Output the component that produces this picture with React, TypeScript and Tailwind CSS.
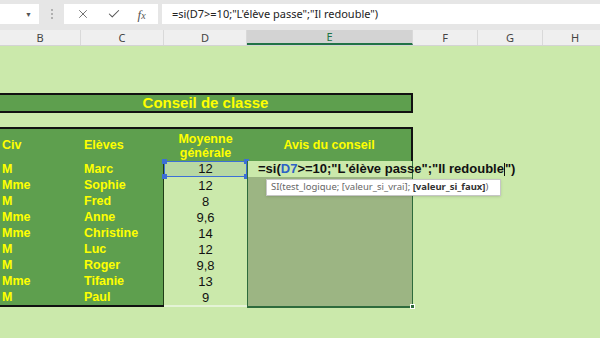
import { X, Check } from 'lucide-react';

const rows = [
  { civ: 'M', nom: 'Marc', moy: '12' },
  { civ: 'Mme', nom: 'Sophie', moy: '12' },
  { civ: 'M', nom: 'Fred', moy: '8' },
  { civ: 'Mme', nom: 'Anne', moy: '9,6' },
  { civ: 'Mme', nom: 'Christine', moy: '14' },
  { civ: 'M', nom: 'Luc', moy: '12' },
  { civ: 'M', nom: 'Roger', moy: '9,8' },
  { civ: 'Mme', nom: 'Tifanie', moy: '13' },
  { civ: 'M', nom: 'Paul', moy: '9' },
];

const columns = [
  { label: 'B', w: 'w-[81px]' },
  { label: 'C', w: 'w-[83px]' },
  { label: 'D', w: 'w-[83px]' },
  { label: 'E', w: 'w-[166px]', active: true },
  { label: 'F', w: 'w-[65px]' },
  { label: 'G', w: 'w-[65px]' },
  { label: 'H', w: 'w-[65px]' },
];

const ui = "font-['Noto_Sans',sans-serif]";

export default function App() {
  return (
    <div className="w-[600px] h-[338px] overflow-hidden bg-[#cbe9ab] font-['Liberation_Sans',Arial,sans-serif]">
      {/* ── formula bar ── */}
      <div className="h-[30px] bg-[#e6e6e6] pt-[4px]">
        <div className="flex h-[20px] items-stretch">
          <div className="w-[39px] bg-white flex items-center justify-end pr-[7px]">
            <span className="text-[7px] text-[#555] leading-none">▼</span>
          </div>
          <div className="w-[25px] flex flex-col items-center justify-center gap-[2px]">
            <span className="w-[2px] h-[2px] bg-[#b0b0b0]" />
            <span className="w-[2px] h-[2px] bg-[#b0b0b0]" />
            <span className="w-[2px] h-[2px] bg-[#b0b0b0]" />
          </div>
          <div className="w-[94px] bg-white flex items-center justify-around px-[4px] text-[#555]">
            <X size={14} strokeWidth={1.4} />
            <Check size={14} strokeWidth={1.8} />
            <span className="font-['Liberation_Serif',serif] italic text-[13px] leading-none">
              f<span className="text-[10px]">x</span>
            </span>
          </div>
          <div
            className={`ml-[4px] flex-1 bg-white flex items-center pl-[10px] text-[11px] text-[#222] whitespace-nowrap ${ui}`}
          >
            =si(D7&gt;=10;"L'élève passe";"Il redouble")
          </div>
        </div>
      </div>

      {/* ── column headers ── */}
      <div className={`flex h-[16px] bg-[#efefef] border-b border-[#d4d4d4] ${ui}`}>
        {columns.map((c) => (
          <div
            key={c.label}
            className={`${c.w} shrink-0 flex items-center justify-center text-[11px] leading-none border-r border-[#d9d9d9] ${
              c.active ? 'bg-[#d3d3d3] text-[#217346] border-b-2 border-b-[#217346]' : 'text-[#444]'
            }`}
          >
            {c.label}
          </div>
        ))}
      </div>

      {/* ── sheet ── */}
      <div className="pt-[47px] w-[413px]">
        <div className="h-[20px] bg-[#5e9f4e] border-y-2 border-r-2 border-[#111] flex items-center justify-center text-[15px] font-bold text-[#ffff00]">
          Conseil de classe
        </div>

        <div className="mt-[14px] h-[34px] bg-[#5e9f4e] border-t-2 border-r-2 border-[#111] flex items-center font-bold text-[12.5px] text-[#ffff00] leading-[14px]">
          <div className="w-[81px] pl-[2px]">Civ</div>
          <div className="w-[83px] pl-[3px]">Elèves</div>
          <div className="w-[83px] text-center pt-[1px]">
            Moyenne
            <br />
            générale
          </div>
          <div className="w-[164px] text-center">Avis du conseil</div>
        </div>

        <div className="flex">
          <div className="flex flex-col">
            {rows.map((r, i) => (
              <div key={r.nom} className="flex h-[16px]">
                <div className="w-[81px] bg-[#5e9f4e] pl-[2px] font-bold text-[12.5px] text-[#ffff00] leading-[17px]">
                  {r.civ}
                </div>
                <div className="w-[83px] bg-[#5e9f4e] pl-[3px] border-r border-[#1f3d18] font-bold text-[12.5px] text-[#ffff00] leading-[17px]">
                  {r.nom}
                </div>
                {i === 0 ? (
                  <div className="relative w-[83px] bg-[#b8d8a3] border border-[#3d6fd6] text-center text-[13px] text-[#111] leading-[14px]">
                    {r.moy}
                    <span className="absolute -left-[3px] -top-[3px] w-[5px] h-[5px] bg-[#3d6fd6]" />
                    <span className="absolute -right-[3px] -top-[3px] w-[5px] h-[5px] bg-[#3d6fd6]" />
                    <span className="absolute -left-[3px] -bottom-[3px] w-[5px] h-[5px] bg-[#3d6fd6]" />
                    <span className="absolute -right-[3px] -bottom-[3px] w-[5px] h-[5px] bg-[#3d6fd6]" />
                  </div>
                ) : (
                  <div className="w-[83px] bg-[#cbe9ab] text-center text-[13px] text-[#111] leading-[17px]">
                    {r.moy}
                  </div>
                )}
              </div>
            ))}
            <div className="flex">
              <div className="w-[164px] h-[2px] bg-[#111]" />
              <div className="w-[83px] h-[2px] bg-[#e4f3d6]" />
            </div>
          </div>

          {/* selected column E */}
          <div className="relative w-[166px] border-x border-b-2 border-[#2e6b3c]">
            <div className="relative h-[16px] bg-[#cbe9ab]">
              <div className="absolute left-[10px] top-0 z-10 whitespace-nowrap font-bold text-[13px] leading-[16px] text-[#111]">
                =si(<span className="text-[#2d62c6]">D7</span>&gt;=10;"L'élève passe";"Il redouble
                <span className="inline-block w-px h-[13px] bg-[#111] align-middle" />")
              </div>
              <div
                className={`absolute left-[18px] top-[18px] z-10 h-[17px] w-[235px] bg-white border border-[#c6c6c6] shadow-sm flex items-center pl-[4px] whitespace-nowrap text-[9.5px] text-[#666] ${ui}`}
              >
                SI(test_logique; [valeur_si_vrai];&nbsp;<b className="text-[#333]">[valeur_si_faux]</b>)
              </div>
            </div>
            <div className="h-[129px] bg-[#9cb583]" />
            <span className="absolute -right-[3px] -bottom-[3px] w-[5px] h-[5px] bg-[#2e6b3c] border border-white" />
          </div>
        </div>
      </div>
    </div>
  );
}
